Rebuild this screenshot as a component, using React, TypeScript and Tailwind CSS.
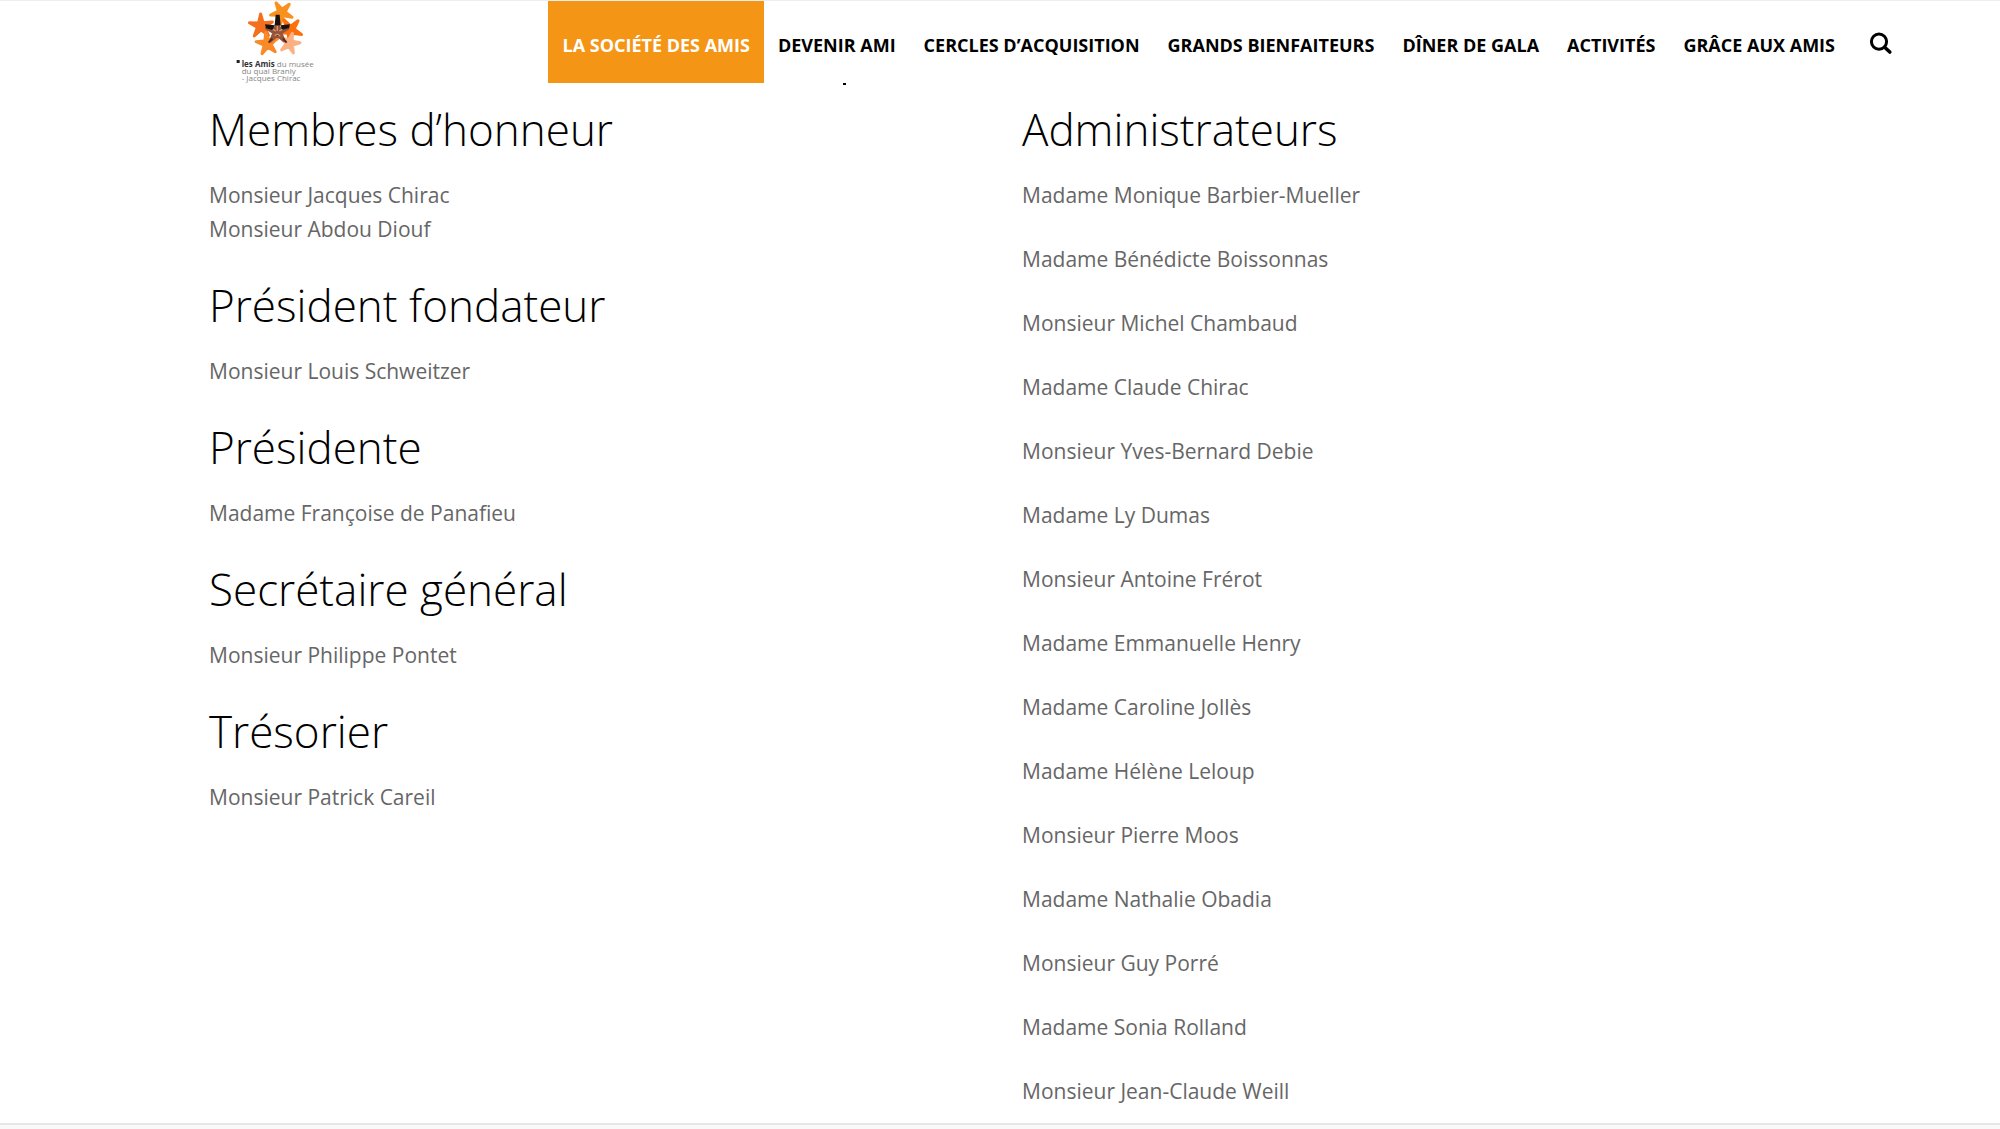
interface Section {
  title: string;
  members: string[];
}

const navItems = [
  'La Société des Amis',
  'Devenir Ami',
  'Cercles d’acquisition',
  'Grands bienfaiteurs',
  'Dîner de gala',
  'Activités',
  'Grâce aux Amis',
];

const sections: Section[] = [
  { title: 'Membres d’honneur', members: ['Monsieur Jacques Chirac', 'Monsieur Abdou Diouf'] },
  { title: 'Président fondateur', members: ['Monsieur Louis Schweitzer'] },
  { title: 'Présidente', members: ['Madame Françoise de Panafieu'] },
  { title: 'Secrétaire général', members: ['Monsieur Philippe Pontet'] },
  { title: 'Trésorier', members: ['Monsieur Patrick Careil'] },
];

const administrators = [
  'Madame Monique Barbier-Mueller',
  'Madame Bénédicte Boissonnas',
  'Monsieur Michel Chambaud',
  'Madame Claude Chirac',
  'Monsieur Yves-Bernard Debie',
  'Madame Ly Dumas',
  'Monsieur Antoine Frérot',
  'Madame Emmanuelle Henry',
  'Madame Caroline Jollès',
  'Madame Hélène Leloup',
  'Monsieur Pierre Moos',
  'Madame Nathalie Obadia',
  'Monsieur Guy Porré',
  'Madame Sonia Rolland',
  'Monsieur Jean-Claude Weill',
];

interface StarProps {
  x: number;
  y: number;
  r: number;
  angle: number;
  fill: string;
}

function Star({ x, y, r, angle, fill }: StarProps) {
  const points = Array.from({ length: 10 }, (_, i) => {
    const radius = i % 2 === 0 ? r : r * 0.32;
    const a = ((angle + i * 36) * Math.PI) / 180;
    return `${x + radius * Math.sin(a)},${y - radius * Math.cos(a)}`;
  }).join(' ');
  return <polygon points={points} fill={fill} stroke={fill} strokeWidth="9" strokeLinejoin="round" />;
}

// Drawn on a 330x270 grid, shown at a third of that size
function Logo() {
  return (
    <svg viewBox="0 0 330 270" className="h-[90px] w-[110px]" role="img" aria-label="Les Amis du musée du quai Branly">
      <Star x={185} y={38} r={34} angle={-30} fill="#f9911e" />
      <Star x={123} y={78} r={36} angle={-2} fill="#f4701d" />
      <Star x={211} y={90} r={36} angle={40} fill="#fb6f0d" />
      <Star x={142} y={131} r={34} angle={-80} fill="#fa8a28" />
      <Star x={209} y={130} r={31} angle={15} fill="#fbb183" />
      <circle cx="174" cy="135" r="11" fill="#fff" />
      <Star x={172} y={95} r={34} angle={0} fill="#93543a" />
      <path d="M167 44h12l3 32h-18zM135 73l29 3-6 14-20-5zM210 73l-28 3 4 13 21-5z" fill="#17120f" />
      <path d="M146 128l11-13M200 128l-11-13" stroke="#5b2c1c" strokeWidth="6" />
      <path d="M158 88l10 5M178 93l9-5M164 107l8-4 9 5M172 78v14" stroke="#d99a70" strokeWidth="4" />
      <rect x="50" y="180" width="9" height="9" fill="#222" />
      <g fontFamily="'Open Sans', sans-serif" fontSize="24" fill="#858585">
        <text x="65" y="200">
          <tspan fontWeight="700" fill="#333">les Amis</tspan> du musée
        </text>
        <text x="65" y="222">du quai Branly</text>
        <text x="65" y="244">- Jacques Chirac</text>
      </g>
    </svg>
  );
}

function SearchIcon() {
  return (
    <svg viewBox="0 0 24 24" className="h-6 w-6" fill="none" stroke="currentColor">
      <circle cx="10" cy="9.6" r="7.6" strokeWidth="3" />
      <path d="M15.6 15.2l5.2 4.8" strokeWidth="3.6" strokeLinecap="round" />
    </svg>
  );
}

function Heading({ children }: { children: string }) {
  return <h2 className="mb-5 text-[44px] leading-[58px] font-light text-black">{children}</h2>;
}

export default function App() {
  return (
    <div className="flex min-h-screen flex-col bg-white font-['Open_Sans',sans-serif] text-[#666]">
      <header className="flex h-[83px] items-start justify-between border-t border-[#eee] pr-[107px] pl-[220px]">
        <a href="#" className="-mt-px shrink-0">
          <Logo />
        </a>
        <div className="flex h-[82px] items-center">
          <nav className="flex h-full">
            {navItems.map((item, i) => (
              <a
                key={item}
                href="#"
                className={
                  i === 0
                    ? 'flex h-full items-center bg-[#f59515] px-[14px] pt-[6px] text-[18px] font-bold whitespace-nowrap text-white uppercase'
                    : 'flex h-full items-center px-[14px] pt-[6px] text-[18px] font-bold whitespace-nowrap text-black uppercase'
                }
              >
                {item}
              </a>
            ))}
          </nav>
          <button type="button" aria-label="Rechercher" className="mt-1 ml-5 text-black">
            <SearchIcon />
          </button>
        </div>
      </header>

      <main className="mx-auto w-full max-w-[1582px]">
        <div className="ml-[634px] h-[2px] w-[3px] bg-black" />
        <div className="grid grid-cols-2 gap-11 pt-[15px] pb-[15px] text-[21px] leading-[34px]">
          <div>
            {sections.map((section) => (
              <section key={section.title} className="mb-[30px]">
                <Heading>{section.title}</Heading>
                {section.members.map((member) => (
                  <p key={member}>{member}</p>
                ))}
              </section>
            ))}
          </div>
          <section>
            <Heading>Administrateurs</Heading>
            <ul className="flex flex-col gap-[30px]">
              {administrators.map((name) => (
                <li key={name}>{name}</li>
              ))}
            </ul>
          </section>
        </div>
      </main>

      <footer className="flex-1 border-t-2 border-[#e6e6e6] bg-[#f9f9f9]" />
    </div>
  );
}
